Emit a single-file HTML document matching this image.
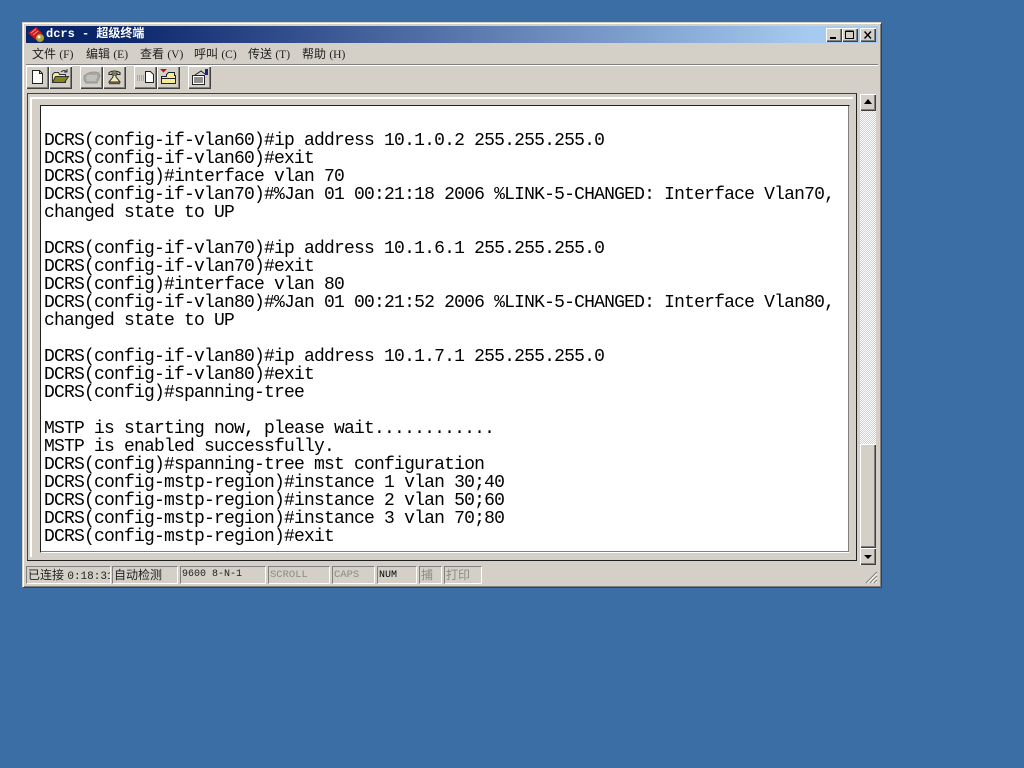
<!DOCTYPE html>
<html>
<head>
<meta charset="utf-8">
<style>
html,body{margin:0;padding:0;width:1024px;height:768px;overflow:hidden;background:#3a6ea5;}
div{position:absolute;box-sizing:border-box;}
svg{position:absolute;}
.zh{font-family:"Liberation Sans","WenQuanYi Zen Hei","Noto Sans CJK SC",sans-serif;}
#win{left:22px;top:22px;width:860px;height:566px;background:#d4d0c8;border:1px solid;border-color:#d4d0c8 #404040 #404040 #d4d0c8;box-shadow:inset 1px 1px 0 #fff,inset -1px -1px 0 #808080;}
#title{left:26px;top:26px;width:852px;height:17px;background:linear-gradient(to right,#0a246a 0%,#0a246a 10%,#a6caf0 92%,#a6caf0 100%);}
#ttext{left:46px;top:26px;color:#fff;font:bold 12px/17px "Liberation Mono","WenQuanYi Zen Hei","Noto Sans CJK SC",monospace;white-space:pre;}
.cap{top:28px;width:16px;height:14px;background:#d4d0c8;box-shadow:inset 1px 1px 0 #fff,inset -1px -1px 0 #404040,inset -2px -2px 0 #808080;}
.menu{top:46px;font-size:12px;line-height:16px;color:#222;white-space:pre;}
.menu span{font:11.500px/16px "Liberation Serif",serif;}
.rule{left:26px;width:852px;height:2px;border-top:1px solid #808080;border-bottom:1px solid #fff;}
.btn{top:66px;width:23px;height:23px;background:#d4d0c8;box-shadow:inset 1px 1px 0 #fff,inset -1px -1px 0 #404040,inset -2px -2px 0 #808080;}
#outer{left:27px;top:93px;width:830px;height:468px;background:#d4d0c8;border-left:1px solid #404040;border-top:1px solid #404040;border-right:1px solid #202020;border-bottom:1px solid #202020;}
#band{left:30px;top:97px;width:823px;height:460px;border-left:2px solid #fff;border-top:2px solid #fff;}
#white{left:40px;top:105px;width:810px;height:448px;background:#fff;border:1px solid;border-color:#202020 #d4d0c8 #fff #202020;box-shadow:inset -1px -1px 0 #808080;}
#term{position:absolute;left:44px;top:132px;margin:0;font:18px/18px "Liberation Mono",monospace;letter-spacing:-0.8px;color:#000;white-space:pre;}
#track{left:860px;top:94px;width:16px;height:470px;background:repeating-conic-gradient(#d4d0c8 0 25%,#fff 0 50%) 0 0/2px 2px;}
#thumb{left:860px;top:444px;width:16px;height:104px;background:#d4d0c8;box-shadow:inset 1px 1px 0 #fff,inset -1px -1px 0 #404040,inset -2px -2px 0 #808080;}
.sb{left:860px;width:16px;height:17px;background:#d4d0c8;box-shadow:inset 1px 1px 0 #fff,inset -1px -1px 0 #404040,inset -2px -2px 0 #808080;}
.st{top:566px;height:18px;border:1px solid;border-color:#808080 #fff #fff #808080;font-size:12px;line-height:16px;color:#222;white-space:pre;padding-left:1px;overflow:hidden;}
.m{font-family:"Liberation Mono",monospace;}
.off{color:#8a8a84;}
</style>
</head>
<body>
<div id="win"></div>
<div id="title"></div>
<svg style="left:27px;top:26px" width="19" height="17" viewBox="0 0 19 17">
<path d="M1 7L9 1l6 6-6 7z" fill="#c8181c"/><path d="M4 7l5-4M6 9l5-4" stroke="#f09090" fill="none"/><circle cx="13" cy="12" r="4" fill="#b0a030"/><circle cx="12" cy="11" r="1.500" fill="#eee"/>
</svg>
<div id="ttext">dcrs - 超级终端</div>
<div class="cap" style="left:826px"><svg style="left:4px;top:9px" width="8" height="2"><rect width="6" height="2" fill="#000"/></svg></div>
<div class="cap" style="left:842px"><svg style="left:3px;top:2px" width="10" height="10"><path d="M0.500 1.500h8v7h-8zM0.500 1h8" fill="none" stroke="#000"/></svg></div>
<div class="cap" style="left:860px"><svg style="left:4px;top:3px" width="9" height="8"><path d="M0.500 0.500l6.500 7M7 0.500l-6.500 7" fill="none" stroke="#000" stroke-width="1.400"/></svg></div>

<div class="menu zh" style="left:32px">文件 <span>(F)</span></div>
<div class="menu zh" style="left:86px">编辑 <span>(E)</span></div>
<div class="menu zh" style="left:140px">查看 <span>(V)</span></div>
<div class="menu zh" style="left:194px">呼叫 <span>(C)</span></div>
<div class="menu zh" style="left:248px">传送 <span>(T)</span></div>
<div class="menu zh" style="left:302px">帮助 <span>(H)</span></div>
<div class="rule" style="top:64px"></div>

<div class="btn" style="left:26px"><svg width="23" height="23"><path d="M6.500 4.500h7l3 3v10h-10z" fill="#fff" stroke="#222"/><path d="M13.500 4.500v3h3" fill="none" stroke="#222"/></svg></div>
<div class="btn" style="left:49px"><svg width="23" height="23"><path d="M3.500 8.500l2-2h4l1 2h6v8h-13z" fill="#f5ec9a" stroke="#333"/><path d="M3.500 16.500l3-6h13l-4 6z" fill="#858520" stroke="#333"/><path d="M12 6q3-3 6 0M18 3v3h-3" fill="none" stroke="#333"/></svg></div>
<div class="btn" style="left:80px"><svg width="23" height="23"><path d="M4 10q7-6 15-3l1 3-3 7H6l-2-3z" fill="#a8a8a4" stroke="#989894"/><path d="M7 10h10M6 12h11M7 14h9" stroke="#d8d8d4"/></svg></div>
<div class="btn" style="left:103px"><svg width="23" height="23"><path d="M6 6.500q5-3 11 0v2h-3V7H9v1.500H6z" fill="#e0d890" stroke="#222"/><path d="M10 9h3v2l4 5H6l4-5z" fill="#f5eeb0" stroke="#222"/><path d="M6 17.500h11" stroke="#804020" stroke-width="1.500"/></svg></div>
<div class="btn" style="left:134px"><svg width="23" height="23"><path d="M3 10h9M3 12h9M3 14h9" stroke="#c06060" stroke-dasharray="1 1"/><path d="M11.500 5.500h5l3 3v8h-8z" fill="#fff" stroke="#222"/></svg></div>
<div class="btn" style="left:157px"><svg width="23" height="23"><path d="M3 3h7l-3.500 3.500z" fill="#b01818"/><path d="M4.500 10.500h5v-2l2-2h6v3h1v8h-14z" fill="#f5ec9a" stroke="#222"/><path d="M4.500 12.500h14" stroke="#222"/></svg></div>
<div class="btn" style="left:188px"><svg width="23" height="23"><path d="M4.500 9.500h12v9h-12z" fill="#fff" stroke="#222"/><path d="M6 12h9M6 14h9M6 16h9" stroke="#222"/><path d="M7 9l6-4 4 3" fill="none" stroke="#222"/><rect x="17" y="3" width="3" height="6" fill="#202080"/></svg></div>

<div id="outer"></div>
<div id="band"></div>
<div id="white"></div>
<pre id="term">DCRS(config-if-vlan60)#ip address 10.1.0.2 255.255.255.0
DCRS(config-if-vlan60)#exit
DCRS(config)#interface vlan 70
DCRS(config-if-vlan70)#%Jan 01 00:21:18 2006 %LINK-5-CHANGED: Interface Vlan70,
changed state to UP

DCRS(config-if-vlan70)#ip address 10.1.6.1 255.255.255.0
DCRS(config-if-vlan70)#exit
DCRS(config)#interface vlan 80
DCRS(config-if-vlan80)#%Jan 01 00:21:52 2006 %LINK-5-CHANGED: Interface Vlan80,
changed state to UP

DCRS(config-if-vlan80)#ip address 10.1.7.1 255.255.255.0
DCRS(config-if-vlan80)#exit
DCRS(config)#spanning-tree

MSTP is starting now, please wait............
MSTP is enabled successfully.
DCRS(config)#spanning-tree mst configuration
DCRS(config-mstp-region)#instance 1 vlan 30;40
DCRS(config-mstp-region)#instance 2 vlan 50;60
DCRS(config-mstp-region)#instance 3 vlan 70;80
DCRS(config-mstp-region)#exit</pre>

<div id="track"></div>
<div id="thumb"></div>
<div class="sb" style="top:94px"><svg width="16" height="17"><path d="M8 5l4 5H4z" fill="#000"/></svg></div>
<div class="sb" style="top:548px"><svg width="16" height="17"><path d="M4 7h8l-4 4z" fill="#000"/></svg></div>

<div class="st zh" style="left:26px;width:85px;">已连接 <span class="m" style="font-size:11px">0:18:31</span></div>
<div class="st zh" style="left:112px;width:66px;">自动检测</div>
<div class="st m" style="left:180px;width:86px;font-size:10px;">9600 8-N-1</div>
<div class="st off m" style="left:268px;width:62px;font-size:10.500px;">SCROLL</div>
<div class="st off m" style="left:332px;width:43px;font-size:10.500px;">CAPS</div>
<div class="st m" style="left:377px;width:40px;font-size:10px;color:#000;line-height:18px;">NUM</div>
<div class="st off zh" style="left:419px;width:23px;">捕</div>
<div class="st off zh" style="left:444px;width:38px;">打印</div>
<svg style="left:864px;top:570px" width="14" height="14"><path d="M13 2L2 13M13 6L6 13M13 10L10 13" stroke="#808080" stroke-width="1.200" fill="none"/><path d="M13 3.500L3.500 13M13 7.500L7.500 13M13 11.500L11.500 13" stroke="#fff" fill="none"/></svg>
</body>
</html>
